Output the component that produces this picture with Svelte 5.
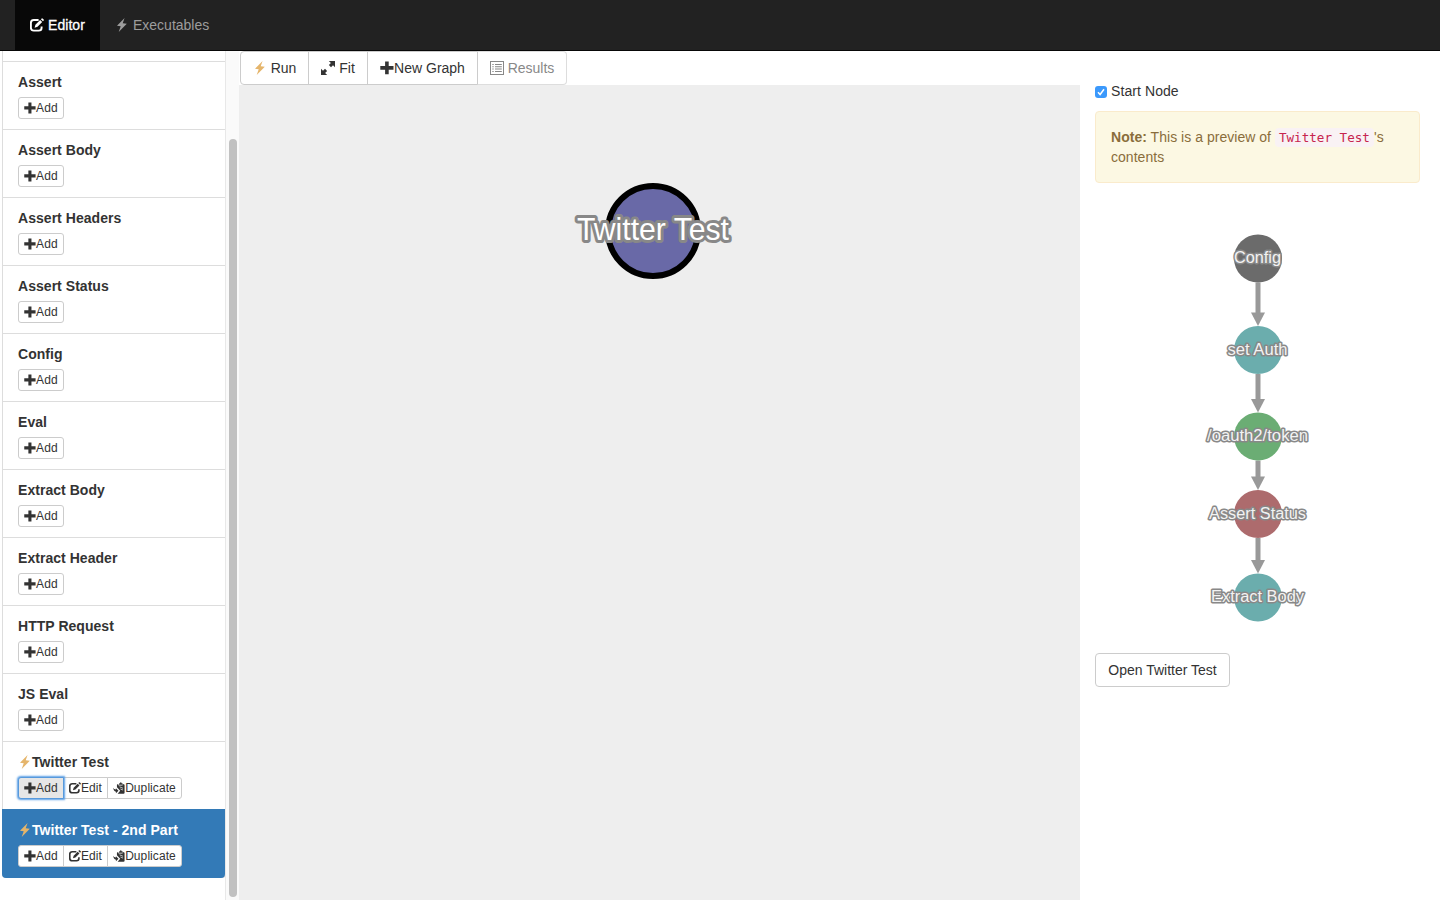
<script>
  const blocks = ['Assert', 'Assert Body', 'Assert Headers', 'Assert Status', 'Config', 'Eval', 'Extract Body', 'Extract Header', 'HTTP Request', 'JS Eval'];
  const graphs = [
    { name: 'Twitter Test', active: false },
    { name: 'Twitter Test - 2nd Part', active: true }
  ];
  const nodes = [
    { label: 'Config', y: 258.5, fill: '#6b6b6b', w: 47 },
    { label: 'set Auth', y: 350, fill: '#6badad', w: 60 },
    { label: '/oauth2/token', y: 436.5, fill: '#6bad74', w: 101 },
    { label: 'Assert Status', y: 514, fill: '#ad6b6d', w: 97 },
    { label: 'Extract Body', y: 597.5, fill: '#6badad', w: 93 }
  ];
</script>

{#snippet icon(name, size)}
  <svg class="icon g-{name}" width={size} height={size} viewBox="0 0 14 14" aria-hidden="true">
    {#if name === 'plus'}
      <path d="M5.1.6h3.6v4.5h4.8v3.6H8.7v4.6H5.1V8.7H.3V5.1h4.8z" />
    {:else if name === 'bolt'}
      <path d="M9.6 0 2 7.7l3.7.6L3.7 14l8.1-8.2-4.1-.5z" />
    {:else if name === 'edit'}
      <path d="M8.6 2H3.8Q.9 2 .9 4.9v4.8q0 2.9 2.9 2.9h4.9q2.9 0 2.9-2.9V8.6" fill="none" stroke="currentColor" stroke-width="1.9" />
      <path d="M4.6 9.7 5.4 6.7 10.1 1.9l2.1 2.1-4.7 4.8zM10.9 1.2l.8-.8q.4-.4.8 0l1.2 1.2q.4.4 0 .8l-.8.8z" />
    {:else if name === 'fit'}
      <path d="M7.8 0H14v6.2l-2-2-2 2L7.9 4.1l2-2zM0 7.8l2 2 2-2 2.1 2.1-2 2 2.1 2.1H0z" />
    {:else if name === 'list'}
      <path fill-rule="evenodd" d="M0 0h14v14H0zM1 1v12h12V1zM2.3 3h1.4v1H2.3zM5 3h6.8v1H5zM2.3 5.3h1.4v1H2.3zM5 5.3h6.8v1H5zM2.3 7.6h1.4v1H2.3zM5 7.6h6.8v1H5zM2.3 10h1.4v1H2.3zM5 10h6.8v1H5z" />
    {:else}
      <path d="M4.6 3.2V6l3.8 4.2-3 3.4h6.9q1.2 0 1.2-1.2V3.2L12 2.3l-1 1.9H6.6l-.8-1.9z" />
      <path d="M6.6 3.2 7.4 1.6h.8Q8.3.3 9.1.3t.9 1.3h.9l.8 1.6z" />
      <path d="M.3 6.8q.7 2 3.1 2V7.4l3 2.8-3 2.8v-1.7Q.6 11 .3 6.8z" />
      <path d="m7.7 5.6 4 1.7M8.7 8.2l3 1.2" stroke="#fff" stroke-width=".8" />
    {/if}
  </svg>
{/snippet}

<div class="page">
  <nav>
    <a class="tab current" href="#editor">{@render icon('edit', 14)}<span>Editor</span></a>
    <a class="tab" href="#executables">{@render icon('bolt', 14)}<span>Executables</span></a>
  </nav>
  <main>
    <aside>
      <div class="list">
        <div class="above"></div>
        {#each blocks as name}
          <section class="item">
            <h4>{name}</h4>
            <div class="group"><button class="xs add">{@render icon('plus', 12)}Add</button></div>
          </section>
        {/each}
        {#each graphs as graph}
          <section class="item" class:active={graph.active}>
            <h4>{@render icon('bolt', 14)}{graph.name}</h4>
            <div class="group">
              <button class="xs add" class:focused={!graph.active}>{@render icon('plus', 12)}Add</button>
              <button class="xs modify">{@render icon('edit', 12)}Edit</button>
              <button class="xs dup">{@render icon('duplicate', 12)}Duplicate</button>
            </div>
          </section>
        {/each}
      </div>
      <div class="track"><div class="thumb"></div></div>
    </aside>

    <div class="workspace">
      <div class="toolbar">
        <button class="run">{@render icon('bolt', 14)}<span>Run</span></button>
        <button class="fit">{@render icon('fit', 14)}<span>Fit</span></button>
        <button class="new">{@render icon('plus', 14)}<span>New Graph</span></button>
        <button class="results">{@render icon('list', 14)}<span>Results</span></button>
      </div>
      <svg class="canvas" viewBox="239 85 841 815" width="841" height="815">
        <circle cx="653" cy="231" r="45" fill="#6969a7" stroke="#000" stroke-width="6" />
        <text class="big" x="577" y="240" textLength="152" lengthAdjust="spacingAndGlyphs">Twitter Test</text>
      </svg>
    </div>

    <div class="details">
      <label>
        <span class="box"><svg width="12" height="12" viewBox="0 0 12 12"><path d="m3 6.2 2.1 2.3L9 3.3" fill="none" stroke="#fff" stroke-width="1.5" /></svg></span>
        Start Node
      </label>
      <div class="note"><b>Note:</b> This is a preview of <code>Twitter Test</code>'s contents</div>
      <svg class="preview" viewBox="1095 203 325 450" width="325" height="450">
        {#each nodes as node, i}
          {#if i < nodes.length - 1}
            <path d="M1258 {node.y + 24}V{nodes[i + 1].y - 35}" stroke="#999" stroke-width="5" />
            <path d="M1251 {nodes[i + 1].y - 37.5}h14l-7 13.5z" fill="#999" />
          {/if}
        {/each}
        {#each nodes as node}
          <circle cx="1258" cy={node.y} r="24" fill={node.fill} />
          <text class="small" x={1257.5 - node.w / 2} y={node.y + 4.5} textLength={node.w} lengthAdjust="spacingAndGlyphs">{node.label}</text>
        {/each}
      </svg>
      <button class="open">Open Twitter Test</button>
    </div>
  </main>
</div>

<style>
  :global(body) { margin: 0; overflow: hidden; background: #fff; }
  * { box-sizing: border-box; }
  .page { width: 1440px; height: 900px; display: flex; flex-direction: column; font: 14px/20px "Liberation Sans", Arial, sans-serif; color: #333; overflow: hidden; }
  nav { height: 51px; flex: none; background: #222; border-bottom: 1px solid #080808; display: flex; padding-left: 15px; }
  .tab { display: flex; align-items: center; height: 50px; padding: 0 15px; color: #9d9d9d; text-decoration: none; gap: 4px; }
  .tab.current { width: 85px; background: #080808; color: #fff; }
  .tab .icon { margin-bottom: 1px; }
  .current span { -webkit-text-stroke: .3px #fff; letter-spacing: .05px; }
  .icon { fill: currentColor; flex: none; }
  main { flex: 1; min-height: 0; display: flex; }
  aside { width: 239px; flex: none; display: flex; padding-left: 2px; }
  .list { width: 224px; height: 827px; flex: none; border: 1px solid #ddd; border-top: 0; border-radius: 0 0 4px 4px; }
  .above { height: 10px; }
  .item { height: 68px; border-top: 1px solid #ddd; padding: 10px 15px; }
  .item.active { background: #337ab7; color: #fff; border-color: #337ab7; margin: 0 0 0 -1px; padding: 10px 16px; height: 69px; border-radius: 0 0 4px 4px; }
  h4 { margin: 0 0 5px; height: 20px; font-size: 14px; line-height: 20px; font-weight: 700; display: flex; align-items: center; white-space: nowrap; letter-spacing: .04px; }
  h4 .g-bolt, .run .g-bolt { color: #e5b56b; }
  .group { display: flex; }
  button { margin: 0; font-family: inherit; color: #333; background: #fff; border: 1px solid #ccc; display: flex; align-items: center; justify-content: center; padding: 0; white-space: nowrap; }
  .xs { height: 22px; font-size: 12px; line-height: 18px; }
  .xs + .xs { margin-left: -1px; }
  .xs:first-child { border-radius: 3px 0 0 3px; }
  .xs:last-child { border-radius: 0 3px 3px 0; }
  .xs:only-child { border-radius: 3px; }
  .add { width: 46px; letter-spacing: .2px; }
  .modify { width: 45px; letter-spacing: .1px; }
  .dup { width: 75px; letter-spacing: .08px; }
  .focused { background: #e6e6e6; border-color: #5799dc; box-shadow: 0 0 2px 1px #5b9fe6; z-index: 1; }
  .track { width: 14px; height: 849px; background: #fafafa; border-left: 1px solid #e8e8e8; margin-left: -1px; padding: 88px 2px 0 3px; }
  .thumb { width: 8px; height: 758px; background: #c1c1c1; border-radius: 4px; }
  .workspace { width: 841px; flex: none; }
  .toolbar { height: 34px; display: flex; padding-left: 1px; }
  .toolbar button { height: 34px; font-size: 14px; gap: 4px; }
  .toolbar button + button { margin-left: -1px; }
  .toolbar button:first-child { border-radius: 4px 0 0 4px; }
  .toolbar button:last-child { border-radius: 0 4px 4px 0; }
  .run { width: 69px; }
  .fit { width: 60px; }
  .toolbar .new { width: 111px; gap: 0; }
  .results { width: 90px; }
  .toolbar .results { color: #888; border-color: #ddd #ddd #ddd #ccc; }
  .toolbar .icon { margin-bottom: 1px; }
  .canvas { display: block; background: #eee; }
  .big { font-size: 30.5px; fill: #fff; stroke: #888; stroke-width: 6px; stroke-linejoin: round; paint-order: stroke; }
  .details { width: 360px; padding: 30px 20px 0 15px; }
  label { display: flex; align-items: center; height: 20px; gap: 4px; letter-spacing: .08px; }
  .box { width: 12px; height: 12px; border-radius: 3px; background: #3b99fc; margin-top: 2px; display: flex; }
  .note { margin-top: 10px; width: 325px; height: 72px; padding: 15px; border: 1px solid #faebcc; border-radius: 4px; background: #fcf8e3; color: #8a6d3b; letter-spacing: .03px; }
  code { font: 12.6px/18px "DejaVu Sans Mono", monospace; padding: 2px 4px; background: #f9f2f4; color: #c7254e; border-radius: 4px; letter-spacing: 0; }
  .preview { display: block; margin-top: 20px; }
  .small { font-size: 16px; fill: #f3f3f3; stroke: #888; stroke-width: 3px; stroke-linejoin: round; paint-order: stroke; }
  .open { width: 135px; height: 34px; border-radius: 4px; font-size: 14px; }
</style>
